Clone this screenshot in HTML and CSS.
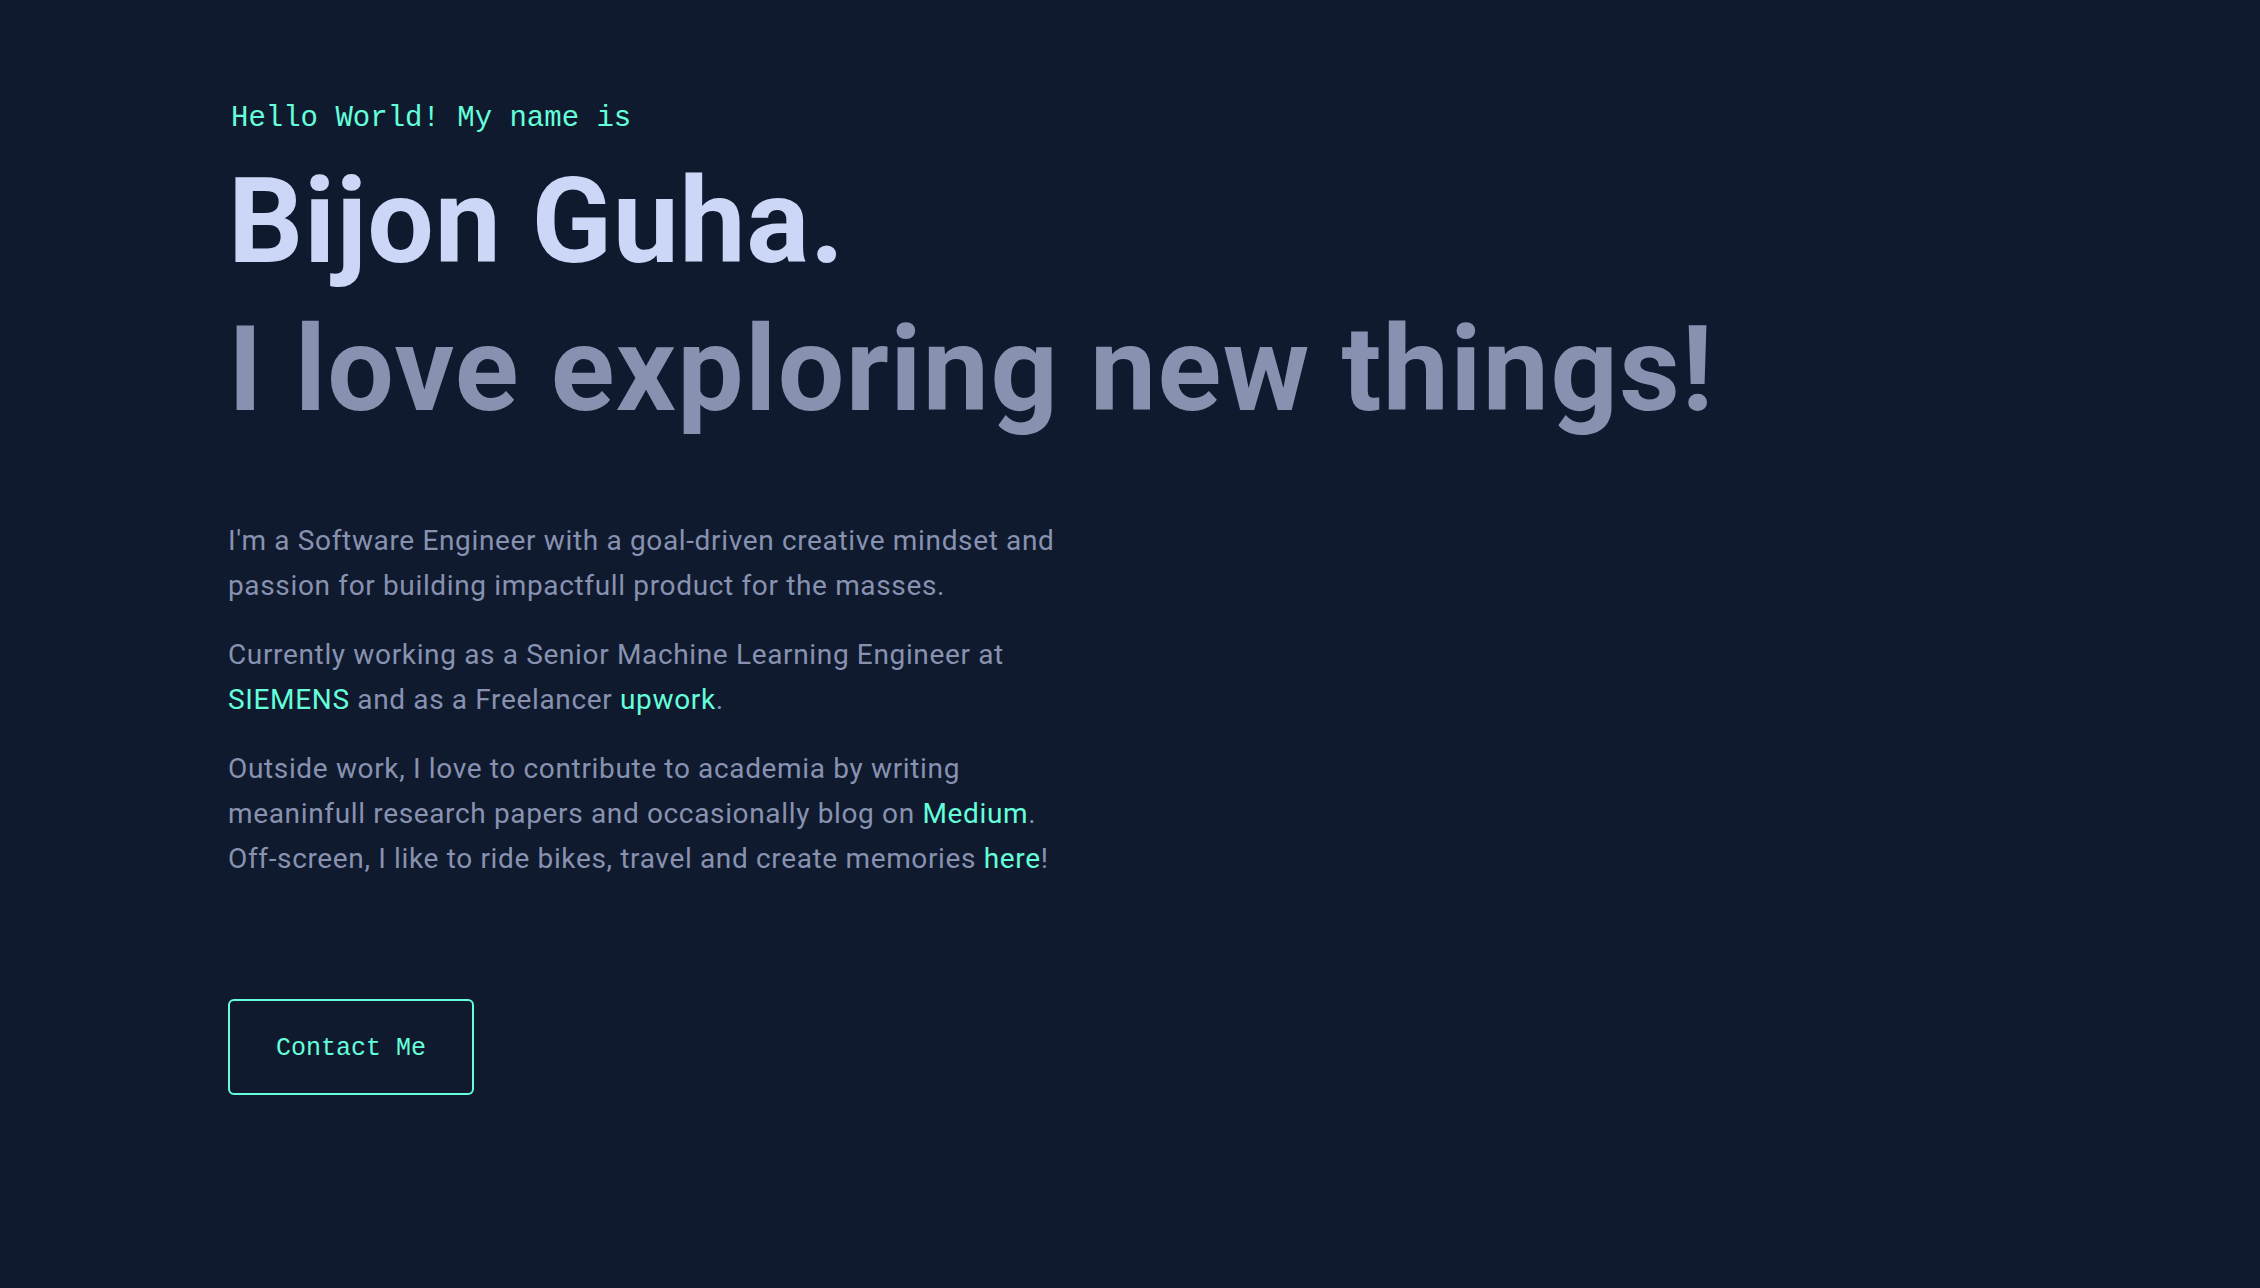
FILE: index.html
```html
<!DOCTYPE html>
<html lang="en">
<head>
<meta charset="utf-8">
<title>Bijon Guha</title>
<link rel="stylesheet" href="styles.css">
</head>
<body>
<main class="hero">
  <p class="intro">Hello World! My name is</p>
  <h1 class="name">Bijon Guha.</h1>
  <h2 class="tagline">I love exploring new things!</h2>
  <div class="about">
    <p>I'm a Software Engineer with a goal-driven creative mindset and passion for building impactfull product for the masses.</p>
    <p>Currently working as a Senior Machine Learning Engineer at <a href="#">SIEMENS</a> and as a Freelancer <a href="#">upwork</a>.</p>
    <p>Outside work, I love to contribute to academia by writing meaninfull research papers and occasionally blog on <a href="#">Medium</a>. Off-screen, I like to ride bikes, travel and create memories <a href="#">here</a>!</p>
  </div>
  <a class="cta" href="#">Contact Me</a>
</main>
</body>
</html>
```
FILE: styles.css
```css
html, body {
  margin: 0;
  padding: 0;
}

body {
  background: #0f1a2e;
  min-height: 100vh;
}

.hero {
  display: flex;
  flex-direction: column;
  align-items: flex-start;
  padding: 104px 0 0 228px;
}

.intro {
  margin: 0 0 25px 3px;
  font-family: "Liberation Mono", "DejaVu Sans Mono", monospace;
  font-size: 29px;
  line-height: 29px;
  color: #64ffda;
}

.name,
.tagline {
  margin: 0;
  font-family: Roboto, "Liberation Sans", sans-serif;
  font-weight: 700;
  font-size: 118px;
  line-height: 1.1;
}

.name {
  color: #ccd6f6;
  letter-spacing: 0.7px;
}

.tagline {
  margin-top: 18px;
  color: #8892b0;
  letter-spacing: 1.4px;
}

.about {
  margin-top: 82px;
  max-width: 860px;
}

.about p {
  margin: 0 0 24px;
  font-family: Roboto, "Liberation Sans", sans-serif;
  font-size: 28px;
  line-height: 45px;
  letter-spacing: 0.65px;
  color: #8892b0;
}

.about p:last-child {
  margin-bottom: 0;
}

.about a {
  color: #64ffda;
  text-decoration: none;
}

.cta {
  margin-top: 118px;
  padding: 35px 46px 32px;
  border: 2px solid #64ffda;
  border-radius: 6px;
  font-family: "Liberation Mono", "DejaVu Sans Mono", monospace;
  font-size: 25px;
  line-height: 25px;
  color: #64ffda;
  text-decoration: none;
}
```
